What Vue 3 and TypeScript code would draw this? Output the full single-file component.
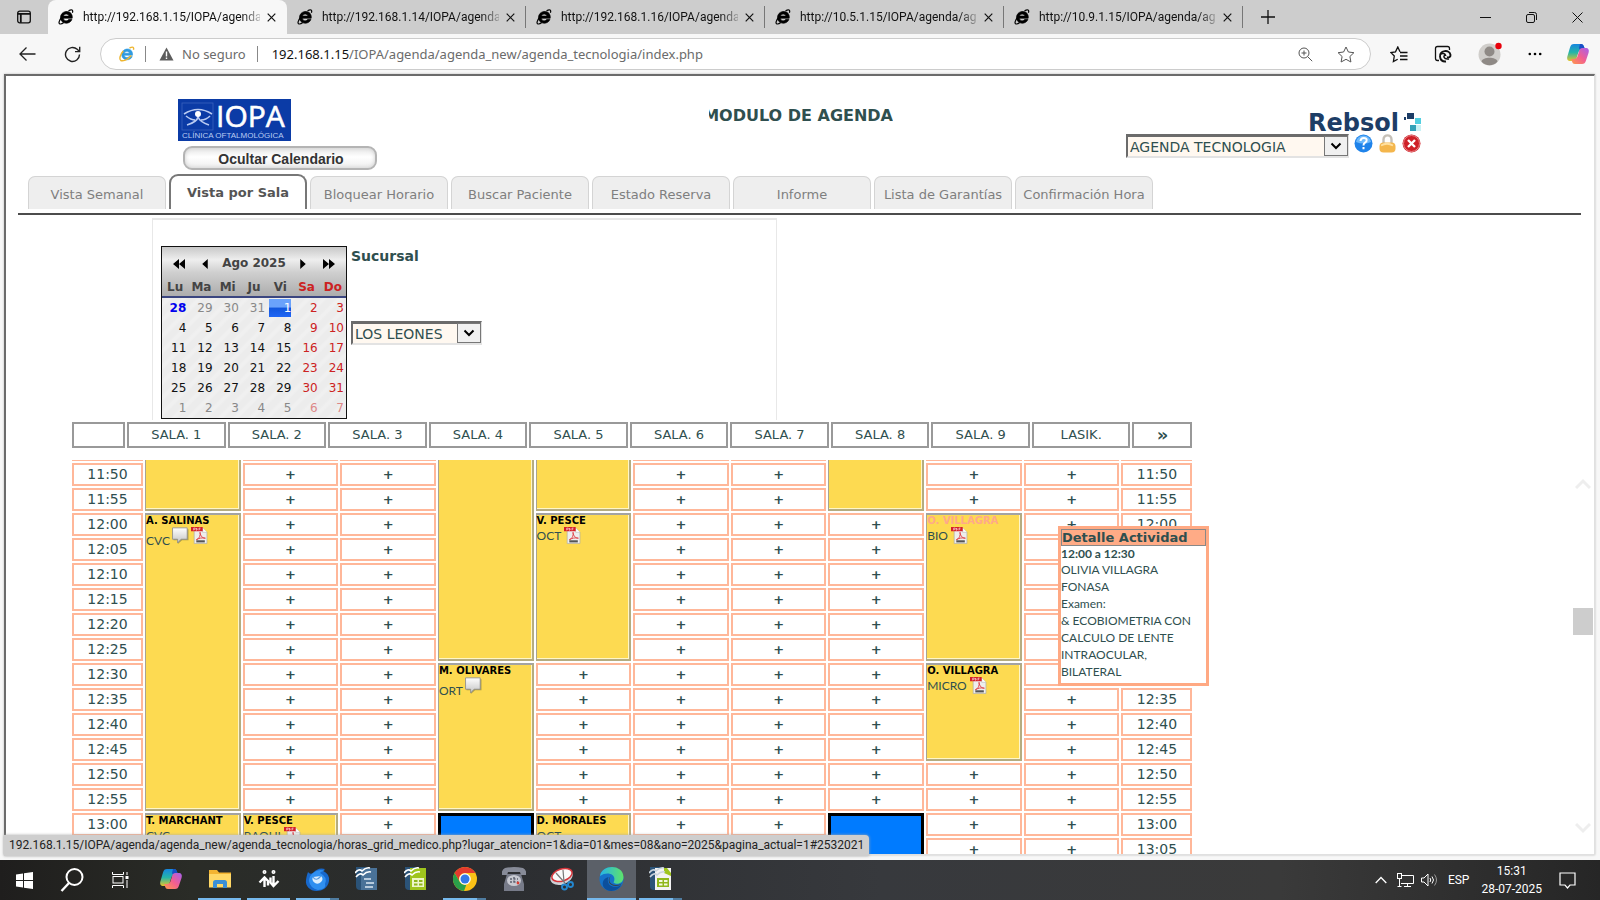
<script setup lang="ts">
import { ref } from 'vue'

interface BrowserTab { url: string; active: boolean }
interface Booking { kind: 'busy' | 'blocked'; span: number; name?: string; service?: string; note?: boolean; pdf?: boolean; hovered?: boolean }
type Slot = Booking | 'free' | null
interface TaskItem { id: string; label: string; running: boolean; stacked?: boolean; active?: boolean }
interface Day { n: number; cls: string }

const browserTabs: BrowserTab[] = [
  { url: 'http://192.168.1.15/IOPA/agenda/', active: true },
  { url: 'http://192.168.1.14/IOPA/agenda/', active: false },
  { url: 'http://192.168.1.16/IOPA/agenda/', active: false },
  { url: 'http://10.5.1.15/IOPA/agenda/age', active: false },
  { url: 'http://10.9.1.15/IOPA/agenda/age', active: false },
]

const views = ['Vista Semanal', 'Vista por Sala', 'Bloquear Horario', 'Buscar Paciente', 'Estado Reserva', 'Informe', 'Lista de Garantías', 'Confirmación Hora']
const currentView = ref('Vista por Sala')
const agenda = ref('AGENDA TECNOLOGIA')
const branch = ref('LOS LEONES')

const weekdays = ['Lu', 'Ma', 'Mi', 'Ju', 'Vi', 'Sa', 'Do']
const numbers = [28, 29, 30, 31, ...Array.from({ length: 31 }, (_, i) => i + 1), 1, 2, 3, 4, 5, 6, 7]
const weeks: Day[][] = Array.from({ length: 6 }, (_, w) =>
  numbers.slice(w * 7, w * 7 + 7).map((n, d) => {
    const index = w * 7 + d
    const names: string[] = []
    if (d > 4) names.push('weekend')
    if (index < 4 || index > 34) names.push('outside')
    if (index === 0) names.push('today')
    if (index === 4) names.push('selected')
    return { n, cls: names.join(' ') }
  }),
)

const rooms = ['SALA. 1', 'SALA. 2', 'SALA. 3', 'SALA. 4', 'SALA. 5', 'SALA. 6', 'SALA. 7', 'SALA. 8', 'SALA. 9', 'LASIK.']
const times = Array.from({ length: 17 }, (_, i) => {
  const minutes = 11 * 60 + 45 + i * 5
  return `${Math.floor(minutes / 60)}:${String(minutes % 60).padStart(2, '0')}`
})

const bookings: Record<string, Booking> = {
  '0-0': { kind: 'busy', span: 3 },
  '0-3': { kind: 'busy', span: 12, name: 'A. SALINAS', service: 'CVC', note: true, pdf: true },
  '0-15': { kind: 'busy', span: 2, name: 'T. MARCHANT', service: 'CVC' },
  '1-15': { kind: 'busy', span: 2, name: 'V. PESCE', service: 'RAQUI', pdf: true },
  '3-0': { kind: 'busy', span: 9 },
  '3-9': { kind: 'busy', span: 6, name: 'M. OLIVARES', service: 'ORT', note: true },
  '3-15': { kind: 'blocked', span: 2 },
  '4-0': { kind: 'busy', span: 3 },
  '4-3': { kind: 'busy', span: 6, name: 'V. PESCE', service: 'OCT', pdf: true },
  '4-15': { kind: 'busy', span: 2, name: 'D. MORALES', service: 'OCT' },
  '7-0': { kind: 'busy', span: 3 },
  '7-15': { kind: 'blocked', span: 2 },
  '8-3': { kind: 'busy', span: 6, name: 'O. VILLAGRA', service: 'BIO', pdf: true, hovered: true },
  '8-9': { kind: 'busy', span: 4, name: 'O. VILLAGRA', service: 'MICRO', pdf: true },
}

const grid: Slot[][] = times.map(() => rooms.map((): Slot => 'free'))
for (const key of Object.keys(bookings)) {
  const [room, row] = key.split('-').map(Number)
  const booking = bookings[key]
  for (let i = 0; i < booking.span; i++) grid[row + i][room] = i === 0 ? booking : null
}
const rows = times.map((time, i) => ({
  time,
  cells: grid[i].map((slot, room) => ({ slot, room })).filter((c) => c.slot !== null),
}))
const asBooking = (slot: Slot): Booking => slot as Booking

const details = ['OLIVIA VILLAGRA', 'FONASA', 'Examen:', '& ECOBIOMETRIA CON', 'CALCULO DE LENTE', 'INTRAOCULAR,', 'BILATERAL']

const taskItems: TaskItem[] = [
  { id: 'copilot', label: 'Copilot', running: false },
  { id: 'files', label: 'Explorador', running: true },
  { id: 'remote', label: 'Acceso remoto', running: true },
  { id: 'mail', label: 'Correo', running: true, stacked: true },
  { id: 'writer', label: 'Writer', running: false },
  { id: 'calc', label: 'Calc', running: false },
  { id: 'chrome', label: 'Chrome', running: true, stacked: true },
  { id: 'phone', label: 'Teléfono', running: false },
  { id: 'snip', label: 'Recortes', running: false },
  { id: 'edge', label: 'Edge', running: true, stacked: true, active: true },
  { id: 'calcdoc', label: 'Hoja de cálculo', running: true, stacked: true },
]
</script>

<template>
  <div class="screen">
    <svg class="defs" aria-hidden="true">
      <defs>
        <symbol id="ie" viewBox="0 0 16 16">
          <path d="M14.200 9.200H5.400c.2 3 4 3.400 5.200 1.300h3.300C12 15.800 2.700 15.600 2.500 8.600 2.500 1.600 12.200.4 13.900 6c.4 1 .4 2 .3 3.200zM5.500 7.100h5.400c-.4-2.700-4.900-2.700-5.400 0z" fill="currentColor" fill-rule="evenodd" stroke="currentColor" stroke-width=".7" />
          <path d="M10.500 1.700c3.400-1.600 4.900-.8 3.900 2M4.300 7.500C1.200 11.300.2 14.300 1.800 14.900c1 .3 2.500-.2 4-1.300" fill="none" stroke="currentColor" stroke-width="1.200" />
        </symbol>
        <linearGradient id="cpa" x1="0" y1="0" x2="0" y2="1"><stop offset="0" stop-color="#1686e0" /><stop offset=".5" stop-color="#25b5a8" /><stop offset="1" stop-color="#e4c52b" /></linearGradient>
        <linearGradient id="cpb" x1="1" y1="0" x2="0" y2="1"><stop offset="0" stop-color="#a560ee" /><stop offset=".5" stop-color="#f25e91" /><stop offset="1" stop-color="#ff9b4a" /></linearGradient>
        <linearGradient id="edgeg" x1="0" y1="0" x2="1" y2="0"><stop offset="0" stop-color="#26b4e8" /><stop offset="1" stop-color="#5ee36a" /></linearGradient>
        <linearGradient id="grey" x1="0" y1="0" x2="0" y2="1"><stop offset="0" stop-color="#fff" /><stop offset="1" stop-color="#c4c4c4" /></linearGradient>
        <symbol id="copilot" viewBox="0 0 24 24">
          <path d="M8 2h7c2 0 2.600 1.300 3.200 3.300L19 8h-3.500c-2 0-2.700 1-3.300 3l-1.900 6c-.5 1.500-1.300 2-2.800 2H4.500C1.500 19 .6 17 1.500 14L4 5.500C4.700 3 5.800 2 8 2z" fill="url(#cpa)" />
          <path d="M14 2h1c2 0 2.600 1.300 3.200 3.300L19 8h-3c-1.500 0-2.500-.5-3-2z" fill="#184fc7" />
          <path d="M16 22H9c-2 0-2.600-1.300-3.200-3.300L5 17h3c2 0 3-1 3.600-3l1.700-5.500c.5-1.600 1.300-2.500 2.900-2.500h3.300c3 0 3.900 2 3 5L20 18.500c-.7 2.500-1.800 3.500-4 3.500z" fill="url(#cpb)" />
        </symbol>
        <symbol id="pdf" viewBox="0 0 16 16">
          <path d="M3 1h8l4 4v10.500H3z" fill="#eee" stroke="#aaa" stroke-width=".6" /><path d="M11 1v4h4" fill="#fff" stroke="#bbb" stroke-width=".6" />
          <path d="M0 0h11v4H0z" fill="#d51f28" /><path d="M2.500 3.200V1h1.500v1.200H2.500M5.200 1v2.200q1.500-1 0-2.200M7.500 3.200V1H9M7.500 2h1.200" fill="none" stroke="#fff" stroke-width=".5" />
          <path d="M5 12c3-1 4-4 3.500-7 .5 4 2.500 5.500 5 5.500-3-.7-6 0-8.500 1.500z" fill="none" stroke="#e0444a" stroke-width=".9" /><path d="M5 12.500h8v2H5z" fill="#555" />
        </symbol>
        <symbol id="note" viewBox="0 0 16 16">
          <path d="M1.500 2h14v10.500H9.500l-4 3.500v-3.500h-4z" fill="#7c7440" opacity=".6" /><path d="M.5 .8h13.800v10.700H8.500L5.300 15v-3.500H.5z" fill="url(#grey)" stroke="#8d8d8d" stroke-width=".8" />
        </symbol>
      </defs>
    </svg>

    <header class="tabstrip">
      <button class="workspace" aria-label="Menú de pestañas">
        <svg width="14" height="14" viewBox="0 0 14 14" fill="none" stroke="#111" stroke-width="1.300"><rect x=".7" y="1.200" width="12.600" height="11.600" rx="2" /><path d="M.7 3.800h12.600M3.800 3.800v9" stroke-width="1.800" /></svg>
      </button>
      <div v-for="tab in browserTabs" :key="tab.url" class="btab" :class="{ active: tab.active }">
        <svg class="fav" width="16" height="16"><use href="#ie" /></svg>
        <span class="bt-text">{{ tab.url }}</span>
        <button class="bt-close" aria-label="Cerrar pestaña"><svg width="9" height="9" viewBox="0 0 9 9"><path d="M.7.7l7.600 7.600M8.300.7L.7 8.300" stroke="#111" stroke-width="1.200" /></svg></button>
      </div>
      <button class="newtab" aria-label="Nueva pestaña"><svg width="14" height="14" viewBox="0 0 14 14"><path d="M7 0v14M0 7h14" stroke="#111" stroke-width="1.300" /></svg></button>
      <div class="winctl">
        <button aria-label="Minimizar"><svg width="11" height="11" viewBox="0 0 11 11"><path d="M0 5.500h11" stroke="#111" /></svg></button>
        <button aria-label="Restaurar"><svg width="11" height="11" viewBox="0 0 11 11" fill="none" stroke="#111"><rect x=".5" y="2.500" width="8" height="8" rx="1.500" /><path d="M3 .5h5.500q2 0 2 2V8" /></svg></button>
        <button aria-label="Cerrar"><svg width="11" height="11" viewBox="0 0 11 11"><path d="M.5.5l10 10M10.500.5l-10 10" stroke="#111" /></svg></button>
      </div>
    </header>

    <div class="toolbar">
      <button class="tool back" aria-label="Atrás"><svg width="17" height="14" viewBox="0 0 17 14" fill="none" stroke="#222" stroke-width="1.300"><path d="M16.500 7H1M7.500.5L1 7l6.500 6.500" /></svg></button>
      <button class="tool reload" aria-label="Actualizar"><svg width="17" height="17" viewBox="0 0 17 17" fill="none" stroke="#222" stroke-width="1.400"><path d="M15.500 8.500a7 7 0 1 1-2.300-5.200L15.500 5.500M15.700.8v4.800H11" /></svg></button>
      <div class="omnibox">
        <svg class="ie-color" width="16" height="16" viewBox="0 0 16 16"><path d="M13.500 9.300H5.200c.4 2.500 3.600 2.900 4.900 1.200h3.100C11.600 15.300 3 15 2.700 8.700 2.700 2 12 1 13.300 6.500c.3 1 .3 1.700.2 2.800zM5.300 7.300h5.200c-.6-2.300-4.500-2.300-5.200 0z" fill="#2f9ae0" stroke="#2f9ae0" stroke-width=".6" fill-rule="evenodd" /><path d="M10.500 2c3.500-1.600 4.700-.8 3.900 1.700M4.300 5C.8 8.800.1 13.300 1.800 14.500c1.800.9 7-.5 10.500-5" fill="none" stroke="#eeb52f" stroke-width="1.400" /></svg>
        <i class="bar"></i>
        <svg width="15" height="14" viewBox="0 0 15 14"><path d="M7.500.5l7 13H.5z" fill="#5d5d5d" /><path d="M7.500 4.500v5M7.500 10.500v1.500" stroke="#fff" stroke-width="1.400" /></svg>
        <span class="insecure">No seguro</span>
        <i class="bar second"></i>
        <span class="address"><b>192.168.1.15</b>/IOPA/agenda/agenda_new/agenda_tecnologia/index.php</span>
        <button class="obtn" aria-label="Zoom"><svg width="15" height="15" viewBox="0 0 15 15" fill="none" stroke="#555"><circle cx="6" cy="6" r="5" /><path d="M9.700 9.700l4.500 4.500M6 3.500v5M3.500 6h5" /></svg></button>
        <button class="obtn" aria-label="Favorito"><svg width="18" height="17" viewBox="0 0 18 17" fill="none" stroke="#555"><path d="M9 1l2.400 5 5.500.7-4 3.800 1 5.500L9 13.300 4.100 16l1-5.500-4-3.800L6.600 6z" stroke-linejoin="round" /></svg></button>
      </div>
      <button class="tool r1" aria-label="Favoritos"><svg width="18" height="17" viewBox="0 0 18 17" fill="none" stroke="#111" stroke-width="1.300"><path d="M10 5.800L7.800 1 5.500 5.800l-4.700.7 3.500 3.500-.9 5.500 4.300-2.300M10 6.500h7.500M10 10h7.500M10 13.500h7.500" /></svg></button>
      <button class="tool r2" aria-label="Modo Internet Explorer"><svg width="18" height="18" viewBox="0 0 18 18" fill="none" stroke="#111"><path d="M5 15.500H3.500q-2 0-2-2v-10q0-2 2-2h10q2 0 2 2V5" stroke-width="1.300" /><path d="M6 12c-.5-7 9.500-8 10.500-2 .2 2-1.800 2.800-3.500 2.200" stroke-width="1.900" /><path d="M6 9.500c2.500-2 5-1 5.500.8-2.500-.3-2.500 4.500 3.500 3.700" stroke-width="1.500" /><path d="M6 12q1 5 6 4.500" stroke-width="1.900" /></svg></button>
      <button class="tool r3" aria-label="Perfil"><svg width="25" height="24" viewBox="0 0 25 24"><circle cx="11.500" cy="12.500" r="11" fill="#d0cecb" /><circle cx="11.500" cy="9.500" r="5" fill="#8f8a86" /><path d="M3.500 19.500c1-5 15-5 16 0-4 5-12 5-16 0z" fill="#8f8a86" /><circle cx="20.500" cy="4" r="3.200" fill="#e8000b" /></svg></button>
      <button class="tool r4" aria-label="Más"><svg width="14" height="4" viewBox="0 0 14 4"><circle cx="1.800" cy="2" r="1.300" /><circle cx="7" cy="2" r="1.300" /><circle cx="12.200" cy="2" r="1.300" /></svg></button>
      <button class="tool r5" aria-label="Copilot"><svg width="24" height="24"><use href="#copilot" /></svg></button>
    </div>

    <main class="frame">
      <div class="masthead">
        <div class="brand">
          <svg width="113" height="42" viewBox="0 0 113 42">
            <rect width="113" height="42" fill="#0b3ba6" /><rect x="4" y="4" width="31" height="27" fill="none" stroke="#3a62bd" stroke-width=".8" />
            <path d="M6 15q14-9 28 0M8 17q5 4 9 4M23 21q5 0 9-4M9 26q10-3 11-8 2 5 11 8" fill="none" stroke="#b9cbf2" stroke-width="1.600" /><circle cx="20" cy="15" r="3" fill="#fff" />
            <text x="38" y="28" font-family="Open Sans, sans-serif" font-size="30" fill="#fff" stroke="#fff" stroke-width=".6">IOPA</text>
            <text x="4" y="39" font-family="Liberation Sans, sans-serif" font-size="8" fill="#b9cbf2">CLÍNICA OFTALMOLÓGICA</text>
          </svg>
          <button class="hide-cal">Ocultar Calendario</button>
        </div>
        <h1 class="marquee"><span>MODULO DE AGENDA</span></h1>
        <div class="account">
          <svg width="113" height="22" viewBox="0 0 113 22">
            <text x="0" y="20" font-family="DejaVu Sans, sans-serif" font-size="24" font-weight="700" fill="#1d3d66">Rebsol</text>
            <path d="M96 6h2v3h-2zM99 2h7v6h-7z" fill="#1d3d66" /><path d="M102 14h6v6h-6z" fill="#33a1b8" /><path d="M107 7h6v6h-6z" fill="#51cfe0" /><path d="M108 14h5v6h-5z" fill="#c8f2f5" />
          </svg>
          <div class="account-row">
            <span class="picker agenda-picker">
              <select v-model="agenda" aria-label="Agenda"><option>AGENDA TECNOLOGIA</option></select>
              <i class="drop"><svg width="12" height="8" viewBox="0 0 12 8"><path d="M1.500 1.500L6 6l4.500-4.500" fill="none" stroke="#000" stroke-width="2" /></svg></i>
            </span>
            <button class="ico" aria-label="Ayuda"><svg width="19" height="19" viewBox="0 0 19 19"><circle cx="9.500" cy="9.500" r="9" fill="#1f83ea" /><path d="M2 8q1-6 7.500-6.500Q16 2 17 8q-7 3-15 0z" fill="#6db9fb" /><path d="M6.500 7q.3-3 3.200-3c4 0 3.500 3.500 1.300 4.700-1.300.8-1.500 1.300-1.500 2.800M9.500 13v2.300" fill="none" stroke="#fff" stroke-width="2" /></svg></button>
            <button class="ico" aria-label="Bloquear"><svg width="19" height="19" viewBox="0 0 19 19"><path d="M5.500 10V5.500c0-5.500 8-5.500 8 0V10" fill="none" stroke="#c5c0b8" stroke-width="2.400" /><rect x="1.500" y="8.500" width="16" height="10" rx="4" fill="#f4b64c" /><path d="M3 11.500q6-3.500 12 0" stroke="#ffe0a0" stroke-width="1.800" fill="none" /></svg></button>
            <button class="ico" aria-label="Salir"><svg width="19" height="19" viewBox="0 0 19 19"><circle cx="9.500" cy="9.500" r="9" fill="#cf2027" /><circle cx="9.500" cy="9.500" r="8" fill="none" stroke="#e8868a" /><path d="M6 6l7 7M13 6l-7 7" stroke="#fff" stroke-width="2.400" /></svg></button>
          </div>
        </div>
      </div>

      <nav class="views">
        <button v-for="v in views" :key="v" :class="{ current: v === currentView }" @click="currentView = v">{{ v }}</button>
      </nav>

      <section class="filters">
        <table class="calendar">
          <thead>
            <tr class="month">
              <th class="prev"><button aria-label="Año anterior"><svg width="12" height="10" viewBox="0 0 11 9"><path d="M5.500 0v9L0 4.500zM11 0v9L5.500 4.500z" /></svg></button></th>
              <th class="prev"><button aria-label="Mes anterior"><svg width="6" height="10" viewBox="0 0 5 9"><path d="M5 0v9L0 4.500z" /></svg></button></th>
              <th colspan="3">Ago 2025</th>
              <th class="following"><button aria-label="Mes siguiente"><svg width="6" height="10" viewBox="0 0 5 9"><path d="M0 0v9l5-4.500z" /></svg></button></th>
              <th class="following"><button aria-label="Año siguiente"><svg width="12" height="10" viewBox="0 0 11 9"><path d="M0 0v9l5.500-4.500zM5.500 0v9L11 4.500z" /></svg></button></th>
            </tr>
            <tr class="names"><th v-for="(w, i) in weekdays" :key="w" :class="{ weekend: i > 4 }">{{ w }}</th></tr>
          </thead>
          <tbody>
            <tr v-for="(week, wi) in weeks" :key="wi"><td v-for="(day, di) in week" :key="di"><span :class="day.cls">{{ day.n }}</span></td></tr>
          </tbody>
        </table>
        <div class="branch">
          <label for="branch">Sucursal</label>
          <span class="picker branch-picker">
            <select id="branch" v-model="branch"><option>LOS LEONES</option></select>
            <i class="drop"><svg width="12" height="8" viewBox="0 0 12 8"><path d="M1.500 1.500L6 6l4.500-4.500" fill="none" stroke="#000" stroke-width="2" /></svg></i>
          </span>
        </div>
      </section>

      <table class="rooms">
        <colgroup><col class="c-first" /><col v-for="r in rooms" :key="r" /><col class="c-last" /></colgroup>
        <thead><tr><th></th><th v-for="r in rooms" :key="r">{{ r }}</th><th class="next"><button aria-label="Página siguiente">»</button></th></tr></thead>
      </table>

      <div class="agenda">
        <div class="scroll">
          <table class="slots">
            <colgroup><col class="c-time" /><col v-for="r in rooms" :key="r" /><col class="c-time" /></colgroup>
            <tbody>
              <tr v-for="row in rows" :key="row.time">
                <td class="time">{{ row.time }}</td>
                <template v-for="cell in row.cells" :key="cell.room">
                  <td v-if="cell.slot === 'free'" class="free"><a href="#">+</a></td>
                  <td v-else :class="asBooking(cell.slot).kind" :rowspan="asBooking(cell.slot).span">
                    <template v-if="asBooking(cell.slot).name">
                      <a href="#" class="patient" :class="{ hovered: asBooking(cell.slot).hovered }">{{ asBooking(cell.slot).name }}</a>
                      <span class="service" :class="{ low: asBooking(cell.slot).note }"><span>{{ asBooking(cell.slot).service }}</span>
                        <svg v-if="asBooking(cell.slot).note" class="mark" width="17" height="17"><use href="#note" /></svg>
                        <svg v-if="asBooking(cell.slot).pdf" class="mark" width="17" height="17"><use href="#pdf" /></svg>
                      </span>
                    </template>
                  </td>
                </template>
                <td class="time">{{ row.time }}</td>
              </tr>
            </tbody>
          </table>
        </div>
        <aside class="tip" role="tooltip">
          <h2>Detalle Actividad</h2>
          <strong>12:00 a 12:30</strong>
          <span v-for="d in details" :key="d">{{ d }}</span>
        </aside>
      </div>

      <div class="scrollbar" aria-hidden="true">
        <svg width="16" height="12" viewBox="0 0 16 12"><path d="M1 10l7-7 7 7" fill="none" stroke="#eee" stroke-width="3" /></svg>
        <i></i>
        <svg width="16" height="12" viewBox="0 0 16 12"><path d="M1 2l7 7 7-7" fill="none" stroke="#eee" stroke-width="3" /></svg>
      </div>
    </main>
    <div class="status">192.168.1.15/IOPA/agenda/agenda_new/agenda_tecnologia/horas_grid_medico.php?lugar_atencion=1&amp;dia=01&amp;mes=08&amp;ano=2025&amp;pagina_actual=1#2532021</div>

    <footer class="taskbar">
      <button class="sys" aria-label="Inicio"><svg width="17" height="17" viewBox="0 0 17 17" fill="#fff"><path d="M0 2.400l7-1V8H0zM8 1.200L17 0v8H8zM0 9h7v6.600l-7-1zM8 9h9v8l-9-1.200z" /></svg></button>
      <button class="sys" aria-label="Buscar"><svg width="24" height="24" viewBox="0 0 24 24" fill="none" stroke="#fff"><circle cx="14.500" cy="9" r="8" stroke-width="2" /><path d="M9 15l-7.500 8" stroke-width="2.400" /></svg></button>
      <button class="sys" aria-label="Vista de tareas"><svg width="17" height="16" viewBox="0 0 17 16" fill="none" stroke="#fff"><path d="M.5 0v2.500h11V0M.5 16v-2.500h11V16M15 0v3M15 8v8" /><rect x="1" y="4.500" width="10" height="6.500" /><path d="M13.500 5.500h3" stroke-width="3" /></svg></button>
      <button v-for="t in taskItems" :key="t.id" class="task" :class="{ running: t.running, stacked: t.stacked, active: t.active, gap: t.id === 'copilot' }" :aria-label="t.label">
        <svg v-if="t.id === 'copilot'" width="24" height="24"><use href="#copilot" /></svg>
        <svg v-else-if="t.id === 'files'" width="22" height="18" viewBox="0 0 22 18"><path d="M0 0h8l2 2.500h12V17H0z" fill="#f3b431" /><path d="M0 4h22v13.500H0z" fill="#ffd866" /><path d="M4 18v-5.500Q4 10 6.500 10h9q2.500 0 2.500 2.500V18h-4v-4H8v4z" fill="#3a8fd6" /></svg>
        <svg v-else-if="t.id === 'remote'" width="22" height="18" viewBox="0 0 22 18" fill="none" stroke="#fff" stroke-width="2.400"><path d="M6.500 17V8.500M1.500 12.500l5-5 3.500 3.500v4.500M15.500 6v9.500M20.500 11l-5 5-3-3.500V7.500" /><circle cx="6.500" cy="2" r=".8" /><circle cx="15.500" cy="2" r=".8" /></svg>
        <svg v-else-if="t.id === 'mail'" width="25" height="24" viewBox="0 0 25 24"><path d="M3 5q2 3 5 1 5-6 12-4l-2 2q7 3 6 10c-1 7-7 10-12.500 10C5 24 0 19 1 13c.4-3 1-5 2-8z" fill="#1768cc" /><path d="M8 6q6-5 12-2-4 0-5 2 8 4 5 11 2 5-7 6-8-2-9-9 0-5 4-8z" fill="#2f8ff0" /><path d="M8 10l8-1q3 3 0 6-3 3-6 1-4-3-2-6z" fill="#dceefd" /><path d="M8 10q3 5 8-1" fill="none" stroke="#5b9de0" stroke-width="1.200" /></svg>
        <svg v-else-if="t.id === 'writer' || t.id === 'calc' || t.id === 'calcdoc'" width="23" height="24" viewBox="0 0 23 24">
          <path d="M1 0h11v23H5q-4 0-4-4z" fill="#2b5378" />
          <path d="M6 1h16v22H6z" :fill="t.id === 'writer' ? '#4a7298' : t.id === 'calc' ? '#9fc51d' : '#f3f3f3'" />
          <path v-if="t.id === 'calcdoc'" d="M15 1h3l4 5v3l-7-3z" fill="#9fc51d" />
          <path d="M0 6q4-5 7-2 4-4 8-3M1 10q4-5 7-2 4-4 8-3" fill="none" :stroke="t.id === 'calcdoc' ? '#c9d3dc' : '#fff'" stroke-width="1.600" />
          <path v-if="t.id === 'writer'" d="M9 12h7M11 16h8M10 20h8" stroke="#dce8f2" stroke-width="1.300" />
          <template v-else><path d="M8 11h12v9H8z" :fill="t.id === 'calc' ? '#eef6c8' : '#8fb71b'" /><path d="M10 13h3.500v2H10zM15 13h3.500v2H15zM10 16.500h3.500v2H10zM15 16.500h3.500v2H15z" :fill="t.id === 'calc' ? '#8fb71b' : '#f3f8e0'" /></template>
        </svg>
        <svg v-else-if="t.id === 'chrome'" width="24" height="24" viewBox="0 0 24 24"><circle cx="12" cy="12" r="12" fill="#fbc116" /><path d="M12 0a12 12 0 0 1 10.400 6H12a6 6 0 0 0-5.200 9L1.600 6A12 12 0 0 1 12 0z" fill="#e33b2e" /><path d="M1.600 6l5.200 9a6 6 0 0 0 6.500 2.800L11 24A12 12 0 0 1 1.600 6z" fill="#2aa04a" /><circle cx="12" cy="12" r="5.800" fill="#fff" /><circle cx="12" cy="12" r="4.500" fill="#3478e6" /></svg>
        <svg v-else-if="t.id === 'phone'" width="24" height="24" viewBox="0 0 24 24"><path d="M3 1q9-2 18 0 4 2 3 7h-5l-1-3H6L5 8H0Q-1 3 3 1z" fill="#878b98" /><path d="M5 7h14l3 10v7H2v-7z" fill="#777b89" /><ellipse cx="12" cy="13.500" rx="7" ry="5.500" fill="#c7c9d1" /><path d="M8 12h8M8 15h8M12 10v7" stroke="#5d616f" stroke-width="1.500" stroke-dasharray="2 1.500" /><circle cx="16" cy="16" r="1.400" fill="#d83c32" /></svg>
        <svg v-else-if="t.id === 'snip'" width="25" height="24" viewBox="0 0 25 24"><ellipse cx="11.500" cy="10" rx="11.500" ry="7.500" transform="rotate(-18 11.500 10)" fill="#cdd0d6" /><ellipse cx="12" cy="8" rx="10.500" ry="6" transform="rotate(-18 12 8)" fill="#fafafa" stroke="#d6343a" stroke-width="1.500" /><path d="M6 6l9 10M13 3l1 12" stroke="#777" stroke-width="1.200" /><g fill="none" stroke="#2387cf" stroke-width="1.900"><circle cx="14.500" cy="20" r="2.500" /><circle cx="20.500" cy="17.500" r="2.500" /></g></svg>
        <svg v-else width="25" height="24" viewBox="0 0 25 24"><circle cx="12.500" cy="12" r="12" fill="#1572c9" /><path d="M1 9C3-3 24-3 24.500 10c0 7-7 8-10 5.500 4-8-6-12-13.500-6.500z" fill="url(#edgeg)" /><path d="M9.500 10c-3 7 4 13 13 8-4 7-14 8-18 2-2-4 0-9 5-10z" fill="#0c4f9c" /><path d="M12 9c-3 3-2 9 5 9 3 0 5-1 6-2-1 2-3 3-6 3-8 0-9-7-5-10z" fill="#3b4046" /></svg>
      </button>
      <div class="tray">
        <svg width="12" height="8" viewBox="0 0 12 8"><path d="M.7 7L6 1.500 11.300 7" fill="none" stroke="#fff" stroke-width="1.300" /></svg>
        <svg width="17" height="14" viewBox="0 0 17 14" fill="none" stroke="#fff"><path d="M5 2.500h11.500v8H4M10.500 10.500v3M7 13.500h7M2.500 6v7.500M.5 13.500h4" /><rect x=".5" y=".5" width="4" height="5" /></svg>
        <svg width="17" height="14" viewBox="0 0 17 14" fill="none" stroke="#fff"><path d="M.5 5h2.500l4-4v12L3 9H.5zM9 5q1.500 2 0 4M11 3.500q3 3.500 0 7" /><path d="M13.500 1.500q4 5.500 0 11" stroke="#999" /></svg>
        <span class="lang">ESP</span>
        <div class="clock"><time>15:31</time><time>28-07-2025</time></div>
        <svg class="bell" width="17" height="17" viewBox="0 0 17 17" fill="none" stroke="#fff" stroke-width="1.200"><path d="M1 1h15v12h-5l-2.500 3L6 13H1z" /></svg>
      </div>
    </footer>
  </div>
</template>

<style>
body { margin: 0; overflow: hidden; }
</style>

<style scoped>
* { box-sizing: border-box; }
button { border: 0; padding: 0; background: none; font: inherit; color: inherit; display: inline-flex; align-items: center; justify-content: center; }
svg { display: block; flex: none; }
a { color: inherit; text-decoration: none; }
.defs { position: absolute; width: 0; height: 0; }
.screen { position: relative; display: flex; flex-direction: column; height: 100vh; background: #f7f7f7; font-family: "DejaVu Sans", sans-serif; color: #2f4f4f; overflow: hidden; }

.tabstrip { display: flex; height: 34px; background: #cdcdcd; font: 12px/16px Roboto, sans-serif; color: #1a1a1a; }
.workspace { flex: none; width: 48px; }
.btab { display: flex; align-items: center; flex: 0 1 239px; min-width: 0; padding: 0 10px 0 10px; border-right: 1px solid #888; border-image: linear-gradient(#cdcdcd 20%, #777 20%, #777 80%, #cdcdcd 80%) 1; color: #111; }
.btab.active { background: #f7f7f7; border: 0; border-radius: 8px 8px 0 0; padding-right: 11px; }
.fav { color: #000; margin-right: 9px; }
.bt-text { flex: 1; min-width: 0; overflow: hidden; white-space: nowrap; -webkit-mask-image: linear-gradient(90deg, #000 90%, rgba(0, 0, 0, .2)); mask-image: linear-gradient(90deg, #000 90%, rgba(0, 0, 0, .2)); }
.bt-close { margin-left: 7px; }
.newtab { flex: none; width: 45px; padding-left: 4px; }
.winctl { display: flex; flex: none; margin-left: auto; }
.winctl button { width: 46px; }

.toolbar { display: flex; align-items: center; height: 40px; padding: 0 10px 0 19px; }
.reload { margin: 0 19px 0 28px; }
.omnibox { display: flex; align-items: center; flex: 1; height: 32px; padding: 0 15px 0 18px; border: 1px solid #ccc; border-radius: 16px; background: #fff; font: 13px/20px "Noto Sans", sans-serif; color: #6b6b6b; }
.bar { width: 1px; height: 16px; margin: 0 13px 0 10px; background: #888; }
.bar.second { margin: 0 14px 0 11px; }
.insecure { margin-left: 8px; }
.address { flex: 1; }
.address b { font-weight: 400; color: #111; }
.obtn { margin-left: 24px; }
.r1 { margin-left: 19px; }
.r2 { margin-left: 26px; }
.r3 { margin-left: 26px; }
.r4 { margin-left: 25px; }
.r5 { margin-left: 24px; }

.frame { position: relative; flex: 1; display: flex; flex-direction: column; min-height: 0; margin: 0 5px 5px 4px; border: 1px solid #e0e0e0; border-top: 2px solid #6b6b6b; border-left: 2px solid #6b6b6b; background: #fff; box-shadow: 0 0 2px #bbb; }
.masthead { display: grid; grid-template-columns: 1fr 188px 1fr; height: 98px; padding: 0 172px; }
.brand { padding-top: 23px; }
.hide-cal { width: 194px; height: 24px; margin: 5px 0 0 5px; padding: 3px 0 0 2px; border: 2px solid #b4b4b4; border-radius: 9px; background: linear-gradient(#e6e6e6, #fff 45%, #eee); font: bold 14px/17px "Liberation Sans", sans-serif; color: #333; box-shadow: inset 0 0 4px #ccc; }
.marquee { display: flex; justify-content: flex-end; height: 20px; margin: 30px 1px 0 3px; overflow: hidden; font-size: 16px; line-height: 20px; white-space: nowrap; }
.account { display: flex; flex-direction: column; align-items: flex-end; padding: 35px 1px 0 0; }
.account-row { display: flex; gap: 5px; margin-top: 1px; }
.ico { height: 19px; }
.picker { position: relative; display: block; height: 24px; }
.picker select { appearance: none; width: 100%; height: 100%; padding: 0 24px 0 2px; border: 2px solid #e3e3e3; border-top: 3px solid #6b6b6b; border-left: 2px solid #6b6b6b; border-radius: 0; background: #fff8f0; font: 14px/18px "DejaVu Sans", sans-serif; color: #2f4f4f; }
.drop { position: absolute; top: 2px; right: 1px; bottom: 2px; width: 24px; display: flex; align-items: center; justify-content: center; border: 1px solid #777; background: #f0f0f0; pointer-events: none; }
.agenda-picker { width: 223px; }
.branch-picker { width: 131px; }

.views { display: flex; align-items: flex-end; gap: 3px; height: 41px; margin: 0 13px 0 12px; padding: 0 0 4px 10px; border-bottom: 2px solid #4c4c4c; font-size: 13px; line-height: 16px; color: #7f7f7f; }
.views button { flex: 0 1 138px; height: 33px; padding-top: 3px; white-space: nowrap; border: 1px solid #d4d4d4; border-bottom: 0; border-radius: 7px 7px 0 0; background: #eee; }
.views .current { height: 35px; padding: 0; border: 2px solid #777; border-bottom: 0; border-radius: 9px 9px 0 0; background: #fff; color: #555; font-weight: bold; }

.filters { display: flex; align-items: flex-start; flex: none; width: 625px; height: 202px; margin: 3px 0 0 146px; padding: 26px 0 0 8px; border: 2px solid #e8e8e8; border-bottom: 0; border-right-width: 1px; border-left-width: 1px; }
.calendar { width: 186px; table-layout: fixed; border: 1px solid #111; border-spacing: 0; background: repeating-linear-gradient(135deg, #ececec 0 5px, #f0f0f0 7px 9px, #ececec 11px); font-size: 12px; line-height: 16px; color: #111; }
.calendar thead { background: linear-gradient(#c8c8c8, #eee 25%, #cfcfcf 50%, #aaa); color: #444; }
.calendar th, .calendar td { padding: 0; }
.month th { height: 31px; color: #444; }
.month .prev { padding: 2px 0 0 8px; }
.month .following { padding: 2px 8px 0 0; }
.month button { vertical-align: middle; color: #000; }
.names th { height: 20px; border-bottom: 2px solid #3b4680; }
.names th.weekend { color: #cc2222; }
.calendar td { height: 20px; text-align: right; padding-right: 2px; }
.calendar td span { display: block; height: 18px; padding: 1px 0 0; }
.calendar .outside { color: #888; }
.calendar .weekend { color: #cc2222; }
.calendar .outside.weekend { color: #dd8888; }
.calendar .today { color: #0000ee; font-weight: bold; }
.calendar .selected { margin-left: 2px; background: linear-gradient(#6aa2fb 45%, #1256dc 50%, #1f66f5); color: #fff; }
.branch { display: flex; flex-direction: column; gap: 56px; margin-left: 4px; padding-top: 1px; font-size: 14px; line-height: 18px; }
.branch label { font-weight: bold; }

.rooms, .slots { width: calc(71% - 3px); table-layout: fixed; border-spacing: 2px; }
.rooms { flex: none; margin-left: 64px; }
.c-first { width: 53px; }
.c-last { width: 60px; }
.rooms th { height: 25px; padding: 1px 0 0; border: 2px solid #999; font: 13px/20px "DejaVu Sans", sans-serif; text-align: center; }
.rooms .next { font-size: 18px; font-weight: bold; }
.next button { height: 18px; padding-bottom: 3px; }
.agenda { position: relative; flex: 1; min-height: 0; margin-top: 10px; }
.scroll { height: 100%; overflow: hidden; }
.slots { margin: -24px 0 0 64px; }
.c-time { width: 71px; }
.slots td { height: 23px; padding: 0; border: 2px solid #ffb799; font-size: 14px; line-height: 19px; text-align: center; }
.slots .free { font-size: 13px; font-weight: bold; }
.slots .busy { vertical-align: top; text-align: left; border: 2px solid #b5ac80; border-top-color: #a3a3a3; border-left: 1px solid #a8a492; background: #fdda51; box-shadow: inset -1px -1px #fff6c8; }
.slots .blocked { background: #007bff; border: 3px solid #000; }
.patient { display: block; font: bold 10px/12px "DejaVu Sans", sans-serif; color: #000; white-space: nowrap; }
.patient.hovered { color: #ffa98a; }
.service { display: flex; gap: 3px; height: 17px; font: 12px/17px Lato, sans-serif; }
.service.low { gap: 2px; }
.service.low > span { padding-top: 5px; }

.tip { position: absolute; top: 66px; left: 1052px; width: 151px; min-height: 160px; border: 3px solid #ffa983; background: #fff; display: flex; flex-direction: column; font: 12px/17px Lato, sans-serif; }
.tip h2 { margin: 0; border: 1px solid #888; background: #ffab86; font: bold 13px/15px "DejaVu Sans", sans-serif; white-space: nowrap; }
.tip strong { line-height: 15px; }

.scrollbar { position: absolute; right: 1px; top: 402px; bottom: 20px; width: 20px; display: flex; flex-direction: column; align-items: center; }
.scrollbar i { width: 20px; height: 27px; margin: 118px 0 auto; background: #cdcdcd; }

.status { position: absolute; left: 4px; bottom: 44px; height: 21px; padding: 0 5px; border-radius: 0 4px 0 0; background: #cecece; font: 12px/21px Roboto, sans-serif; color: #222; white-space: nowrap; box-shadow: 0 0 3px #aaa; }

.taskbar { display: flex; height: 40px; flex: none; background: linear-gradient(90deg, #1f1e1d, #2a2c27 12%, #2b2d30 30%, #37393d 55%, #3a3a3a 80%, #262626); color: #fff; font: 12px/16px Roboto, sans-serif; }
.sys { width: 48px; }
.task { width: 49px; border-bottom: 2px solid transparent; }
.task.gap { margin-left: 2px; }
.task.running { border-image: linear-gradient(90deg, transparent 5px, #76b9ed 5px, #76b9ed 44px, transparent 44px) 2; }
.task.stacked { border-image: linear-gradient(90deg, transparent 5px, #76b9ed 5px, #76b9ed 36px, #4f7ca0 36px, #4f7ca0 44px, transparent 44px) 2; }
.task.active { background: #5b6068; border-image: linear-gradient(#76b9ed, #76b9ed) 2; }
.tray { display: flex; align-items: center; margin-left: auto; padding-right: 24px; }
.tray svg + svg { margin-left: 7px; }
.tray svg:first-child { margin-right: 3px; }
.lang { margin-left: 10px; }
.clock { display: flex; flex-direction: column; align-items: center; gap: 2px; margin: 0 17px 0 12px; }
</style>
